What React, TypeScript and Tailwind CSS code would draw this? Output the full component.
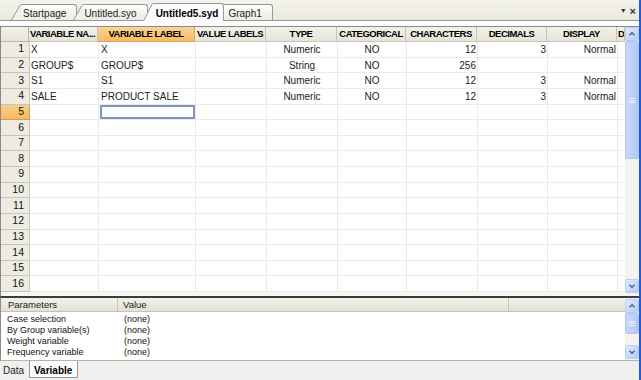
import React from "react";

// Column definitions for the variable sheet
const COLUMNS = [
  { label: "VARIABLE NA...", w: "w-[69px]", head: "justify-start pl-[1px]", cell: "text-left pl-[1px]" },
  { label: "VARIABLE LABEL", w: "w-[97px]", head: "justify-center", cell: "text-left pl-[2px]", selected: true },
  { label: "VALUE LABELS", w: "w-[71px]", head: "justify-center", cell: "text-left pl-[1px]" },
  { label: "TYPE", w: "w-[71px]", head: "justify-center", cell: "text-center" },
  { label: "CATEGORICAL", w: "w-[69px]", head: "justify-center", cell: "text-center" },
  { label: "CHARACTERS", w: "w-[71px]", head: "justify-center", cell: "text-right pr-[1px]" },
  { label: "DECIMALS", w: "w-[70px]", head: "justify-center", cell: "text-right pr-[1px]" },
  { label: "DISPLAY", w: "w-[70px]", head: "justify-center", cell: "text-right pr-[1px]" },
  { label: "D", w: "w-[8px]", head: "justify-start pl-[1px]", cell: "" },
];

const ROWS = [
  ["X", "X", "", "Numeric", "NO", "12", "3", "Normal", ""],
  ["GROUP$", "GROUP$", "", "String", "NO", "256", "", "", ""],
  ["S1", "S1", "", "Numeric", "NO", "12", "3", "Normal", ""],
  ["SALE", "PRODUCT SALE", "", "Numeric", "NO", "12", "3", "Normal", ""],
];

const PARAMS = [
  ["Case selection", "(none)"],
  ["By Group variable(s)", "(none)"],
  ["Weight variable", "(none)"],
  ["Frequency variable", "(none)"],
];

function Chevron({ up }: { up?: boolean }) {
  return (
    <svg width="14" height="14" viewBox="0 0 14 14">
      <path
        d={up ? "M4 8.5 L7 5.5 L10 8.5" : "M4 5.5 L7 8.5 L10 5.5"}
        fill="none"
        stroke="#4d6185"
        strokeWidth="1.6"
      />
    </svg>
  );
}

function ScrollButton({ up }: { up?: boolean }) {
  return (
    <div className="h-[14px] w-[14px] rounded-[2px] border border-[#b9cbf3] bg-gradient-to-br from-[#e1eafe] to-[#b6cafa] flex items-center justify-center">
      <Chevron up={up} />
    </div>
  );
}

function Thumb({ h }: { h: string }) {
  return (
    <div className={`${h} w-[14px] rounded-[2px] border border-[#b0c4f0] bg-gradient-to-r from-[#c9d8fc] to-[#b3c8f8] flex flex-col items-center justify-center gap-[1px]`}>
      <div className="w-[6px] h-[1px] bg-[#eef3ff]" />
      <div className="w-[6px] h-[1px] bg-[#eef3ff]" />
      <div className="w-[6px] h-[1px] bg-[#eef3ff]" />
    </div>
  );
}

function Slant({ h, active }: { h: number; active?: boolean }) {
  return (
    <svg width="10" height={h} viewBox={`0 0 10 ${h}`} className="block shrink-0">
      <polygon points={`0,${h} 9,1 10,0 10,${h}`} fill={active ? "#fcfcfe" : "#f1f0ea"} />
      <line x1="0.5" y1={h} x2="9.5" y2="0.5" stroke="#919b9c" strokeWidth="1" />
    </svg>
  );
}

export default function App() {
  return (
    <div className="w-[641px] h-[380px] overflow-hidden bg-[#ece9d8] border-r-2 border-[#1d5ce0] flex flex-col font-['Liberation_Sans',Arial,sans-serif] text-[#000]">
      {/* document tabs */}
      <div className="h-[21px] flex items-end border-b border-[#919b9c] bg-gradient-to-b from-[#f3f2ec] to-[#ebe9de] pl-[11px] pr-[3px]">
        <div className="flex items-end h-[16px] relative z-[1]">
          <Slant h={16} />
          <div className="h-[16px] pl-[2px] pr-[10px] pt-[2px] border-t border-r border-[#919b9c] rounded-tr-[3px] bg-gradient-to-b from-[#fdfdfb] to-[#ecebe4] text-[10px] leading-[13px] text-[#222]">
            Startpage
          </div>
        </div>
        <div className="flex items-end h-[16px] -ml-[4px] relative z-[2]">
          <Slant h={16} />
          <div className="h-[16px] pl-[1px] pr-[10px] pt-[2px] border-t border-r border-[#919b9c] rounded-tr-[3px] bg-gradient-to-b from-[#fdfdfb] to-[#ecebe4] text-[10px] leading-[13px] text-[#222]">
            Untitled.syo
          </div>
        </div>
        <div className="flex items-end h-[18px] -ml-[5px] -mb-[1px] relative z-[4]">
          <Slant h={18} active />
          <div className="h-[18px] pl-[3px] pr-[5px] pt-[3px] border-t border-r border-[#919b9c] rounded-tr-[3px] bg-[#fcfcfe] text-[10px] leading-[14px] font-bold">
            Untitled5.syd
          </div>
        </div>
        <div className="h-[16px] pl-[4px] pr-[10px] pt-[2px] border-t border-r border-[#919b9c] rounded-tr-[3px] bg-gradient-to-b from-[#fdfdfb] to-[#ecebe4] text-[10px] leading-[13px] text-[#222] relative z-[3]">
          Graph1
        </div>
        <div className="ml-auto flex items-center gap-[3px] text-[10px] text-[#333] mb-[3px]">
          <span className="text-[7px]">▼</span>
          <span className="font-bold text-[11px] leading-none">×</span>
        </div>
      </div>
      <div className="h-[5px] bg-[#fcfcfe]" />

      {/* variable grid */}
      <div className="h-[270px] flex border-t border-l border-[#8c8a80] bg-white">
        <div className="w-[624px] flex flex-col">
          {/* header */}
          <div className="h-[15px] flex">
            <div className="w-[29px] h-[15px] bg-gradient-to-b from-[#f2f1ea] to-[#e6e4d8] border-r border-b border-[#b8b5a4]" />
            {COLUMNS.map((c) => (
              <div
                key={c.label}
                className={`${c.w} h-[15px] shrink-0 flex items-center overflow-hidden whitespace-nowrap border-r border-b text-[9.5px] font-bold tracking-[-0.5px] text-[#000] ${c.head} ${
                  c.selected
                    ? "bg-gradient-to-b from-[#fcd293] to-[#f7bb63] border-[#d9a15a]"
                    : "bg-gradient-to-b from-[#f2f1ea] to-[#e6e4d8] border-[#c7c4b2]"
                }`}
              >
                {c.label}
              </div>
            ))}
          </div>
          {/* rows */}
          {Array.from({ length: 16 }).map((_, r) => {
            const data = ROWS[r];
            const current = r === 4;
            return (
              <div key={r} className="h-[15.625px] flex">
                <div
                  className={`w-[29px] shrink-0 flex items-center justify-end pr-[5px] text-[10.5px] text-[#111] border-r border-b ${
                    current
                      ? "bg-gradient-to-b from-[#fbcf8c] to-[#f6b860] border-[#d39a52]"
                      : "bg-[#eeece2] border-[#c9c6b6]"
                  }`}
                >
                  {r + 1}
                </div>
                {COLUMNS.map((c, ci) => (
                  <div
                    key={c.label}
                    className={`${c.w} shrink-0 border-r border-b border-[#ebeae3] text-[10px] leading-[15px] whitespace-nowrap overflow-hidden text-[#222] ${c.cell}`}
                  >
                    {current && c.selected ? (
                      <div className="h-full -ml-[1px] border-2 border-[#7e98bc]" />
                    ) : (
                      data?.[ci] ?? ""
                    )}
                  </div>
                ))}
              </div>
            );
          })}
          <div className="flex-1 bg-[#f7f7f4]" />
        </div>
        {/* vertical scrollbar */}
        <div className="w-[14px] flex flex-col bg-[#f4f3ee]">
          <ScrollButton up />
          <Thumb h="h-[118px]" />
          <div className="flex-1" />
          <ScrollButton />
          <div className="h-[3px]" />
        </div>
      </div>

      {/* parameters panel */}
      <div className="h-[65px] flex border-t-2 border-[#3c3c3c] border-l border-b border-l-[#8c8a80] border-b-[#b8b5a4] bg-white">
        <div className="w-[624px] flex flex-col">
          <div className="h-[14px] flex text-[9.5px] text-[#222] bg-gradient-to-b from-[#f2f1ea] to-[#e4e1d4] border-b border-[#c7c4b2]">
            <div className="w-[117px] pl-[7px] leading-[14px] border-r border-[#c7c4b2]">Parameters</div>
            <div className="w-[391px] pl-[5px] leading-[14px] border-r border-[#c7c4b2]">Value</div>
            <div className="flex-1" />
          </div>
          <div className="pt-[2px] flex flex-col">
            {PARAMS.map(([k, v]) => (
              <div key={k} className="h-[11px] flex text-[9px] leading-[11px] text-[#111]">
                <div className="w-[117px] pl-[6px]">{k}</div>
                <div className="pl-[6px]">{v}</div>
              </div>
            ))}
          </div>
        </div>
        <div className="w-[14px] flex flex-col bg-[#f4f3ee] pt-[1px]">
          <ScrollButton up />
          <Thumb h="h-[21px]" />
          <div className="flex-1" />
          <ScrollButton />
          <div className="h-[1px]" />
        </div>
      </div>

      {/* sheet tabs */}
      <div className="flex-1 flex items-start bg-[#f0f0ee] text-[10px]">
        <div className="w-[29px] h-[17px] pl-[3px] pt-[2px] leading-[15px] text-[#222]">Data</div>
        <div className="w-[49px] h-[17px] pl-[4px] pt-[2px] leading-[15px] font-bold bg-[#fcfcfe] border-l border-r border-b border-[#919b9c]">
          Variable
        </div>
      </div>
    </div>
  );
}
